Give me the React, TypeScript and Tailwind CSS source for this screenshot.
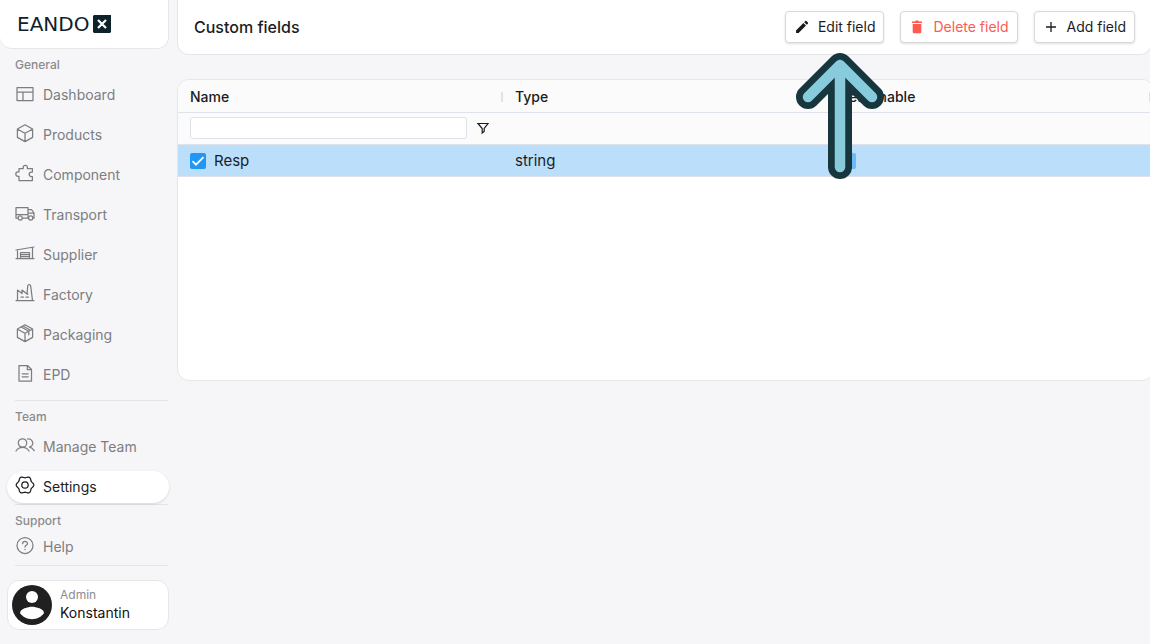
import type { ReactNode } from "react";

const stroke = { fill: "none", stroke: "currentColor", strokeWidth: 1.25, strokeLinecap: "round", strokeLinejoin: "round" } as const;

function Icon({ children }: { children: ReactNode }) {
  return (
    <svg viewBox="0 0 20 20" className="mb-1 size-5 shrink-0" aria-hidden="true" {...stroke}>
      {children}
    </svg>
  );
}

const general: { label: string; icon: ReactNode }[] = [
  { label: "Dashboard", icon: <path d="M2 4.500h16v13H2zM2 9h16M8 9v8.500" /> },
  { label: "Products", icon: <path d="M10 1.800l7.600 4.200v8.400L10 18.600l-7.600-4.200V6zM2.600 6.200L10 10.300l7.400-4.100M10 10.300v8.100" /> },
  { label: "Component", icon: <path d="M4 17.500v-4.200H3a2.200 2.200 0 010-4.400h1V5.700h4.200V4.500a2.100 2.100 0 014.200 0v1.200h5v3.400h-1a2.200 2.200 0 000 4.400h1v4z" /> },
  {
    label: "Transport",
    icon: (
      <>
        <path d="M3 15H1V4.500h12V15H7.500M13 6.500h3.500L19 10v5h-1M13 10.200h6M12.500 15h1M1 11.500h12" />
        <circle cx="5.200" cy="15" r="2.100" />
        <circle cx="15.700" cy="15" r="2.100" />
      </>
    ),
  },
  { label: "Supplier", icon: <path d="M1 15.500h18M2.500 15.500V6.500M17.500 15.500V4.500M1 7l18-3M5.500 15.500V9.500h9v6M5.500 11.500h9M5.500 13.500h9" /> },
  { label: "Factory", icon: <path d="M1 17.500h18M2.500 17.500V7l4.500 3.500V7l5 4 .8-8.500c.1-1.300 2.600-1.300 2.800 0l1.900 15M12 11h1M6 14h2.500M11 14h2.500" /> },
  { label: "Packaging", icon: <path d="M10 1.800l7.600 4.200v8.400L10 18.600l-7.600-4.200V6zM2.600 6.200L10 10.300l7.400-4.100M10 10.300v8.100M6.200 4l7.600 4.200v3.600M8 3l7.500 4.200" /> },
  { label: "EPD", icon: <path d="M4 2.500h8.500L16.500 6.500v11.500H4zM12.300 2.500v4.200h4M7.200 10.800h6M7.200 13.800h6" /> },
];

const peopleIcon = (
  <>
    <circle cx="7.500" cy="8" r="4.200" />
    <path d="M1 16c1.500-2.300 3.700-3.600 6.500-3.600S12.600 13.700 14 16M12.500 4a4.200 4.200 0 112 8.200c2 .3 3.500 1.600 4.700 3.500" />
  </>
);

const gearOutline = Array.from({ length: 72 }, (_, i) => {
  const a = (i / 72) * 2 * Math.PI;
  const r = 8 + 0.8 * Math.cos(6 * a);
  return `${(10 + r * Math.cos(a)).toFixed(2)},${(10 + r * Math.sin(a)).toFixed(2)}`;
}).join(" ");

const gearIcon = (
  <>
    <circle cx="10" cy="10" r="3.200" />
    <polygon points={gearOutline} />
  </>
);

function NavItem({ label, icon, active = false }: { label: string; icon: ReactNode; active?: boolean }) {
  return (
    <a
      href="#"
      aria-current={active ? "page" : undefined}
      className={
        active
          ? "mx-[7px] flex h-8 items-center gap-2 rounded-2xl bg-white pl-2 text-sm text-[#1c1c1e] shadow-sm"
          : "mx-[7px] flex h-8 items-center gap-2 pl-2 text-sm"
      }
    >
      <Icon>{icon}</Icon>
      {label}
    </a>
  );
}

function SectionTitle({ children }: { children: ReactNode }) {
  return <h2 className="pl-[15px] pt-2 text-xs font-medium leading-4 text-[#8b8b8d]">{children}</h2>;
}

function ToolButton({ label, icon, danger = false }: { label: string; icon: ReactNode; danger?: boolean }) {
  return (
    <button
      type="button"
      className={
        danger
          ? "flex h-8 items-center gap-2 rounded border border-[#d9d9d9] bg-white px-2 text-sm text-[#ff5a50] shadow-sm"
          : "flex h-8 items-center gap-2 rounded border border-[#d9d9d9] bg-white px-2 text-sm text-[#1c1c1e] shadow-sm"
      }
    >
      {icon}
      {label}
    </button>
  );
}

export default function App() {
  return (
    <div className="flex min-h-screen overflow-x-hidden bg-[#f6f6f9] font-['Inter','Liberation_Sans',sans-serif] text-[#1c1c1e]">
      <aside className="w-44 shrink-0 text-[#7d7d7f]">
        <div className="mr-[7px] flex h-[49px] items-center gap-1 rounded-b-xl border-b border-r border-[#e6e6e8] bg-white pl-4 text-[#0e2229]">
          <span className="pl-px font-['DejaVu_Sans',sans-serif] text-[20px] leading-6">EANDO</span>
          <svg viewBox="0 0 18 18" className="size-[18px]" role="img" aria-label="X">
            <path d="M1 0h17v17l-1 1H1l-1-1V1z" fill="currentColor" />
            <path d="M5 5l8 8M13 5l-8 8" stroke="#fff" strokeWidth="2.200" />
          </svg>
        </div>
        <nav aria-label="Main">
          <SectionTitle>General</SectionTitle>
          <div className="flex flex-col gap-2 pt-1.5">
            {general.map((n) => (
              <NavItem key={n.label} {...n} />
            ))}
          </div>
          <div className="ml-[15px] mr-2 mt-[9px] border-t border-[#e4e4e7]" />
          <SectionTitle>Team</SectionTitle>
          <div className="flex flex-col gap-2 pt-1.5">
            <NavItem label="Manage Team" icon={peopleIcon} />
            <NavItem label="Settings" icon={gearIcon} active />
          </div>
          <div className="ml-[15px] mr-2 mt-px border-t border-[#e4e4e7]" />
          <SectionTitle>Support</SectionTitle>
          <div className="pt-0.5">
            <NavItem
              label="Help"
              icon={
                <>
                  <circle cx="10" cy="10.500" r="8" />
                  <path d="M7.600 8.700c0-3 4.900-3 4.900-.2 0 1.800-2.500 1.900-2.500 3.600M10 14.400v.3" />
                </>
              }
            />
          </div>
          <div className="ml-[15px] mr-2 mt-0.5 border-t border-[#e4e4e7]" />
        </nav>
        <div className="mx-[7px] mt-3.5 flex h-[50px] items-center gap-2 rounded-xl border border-[#e6e6e8] bg-white pl-1">
          <svg viewBox="0 0 40 40" className="size-10" aria-hidden="true">
            <circle cx="20" cy="20" r="20" fill="#202020" />
            <circle cx="20" cy="12" r="6" fill="#fff" />
            <path d="M8 28c0-4 8-6.200 12-6.200S32 24 32 28c-2.600 3.900-7 6.200-12 6.200S10.600 31.900 8 28z" fill="#fff" />
          </svg>
          <div>
            <p className="text-xs leading-4 text-[#8b8b8d]">Admin</p>
            <p className="text-sm leading-5 text-[#111]">Konstantin</p>
          </div>
        </div>
      </aside>

      <main className="-mr-0.5 ml-px min-w-0 grow">
        <header className="flex h-[55px] items-center justify-between rounded-b-xl border border-t-0 border-[#e6e6e8] bg-white pl-4 pr-4">
          <h1 className="text-base font-medium">Custom fields</h1>
          <div className="relative flex gap-4">
            <ToolButton
              label="Edit field"
              icon={
                <svg viewBox="0 0 16 16" className="size-4" fill="currentColor" aria-hidden="true">
                  <path d="M2 11.400L9.400 4l2.600 2.600L4.600 14H2zM10.200 3.200l1.100-1.100a.8.8 0 011.100 0l1.500 1.500a.8.8 0 010 1.100l-1.100 1.100z" />
                </svg>
              }
            />
            <ToolButton
              danger
              label="Delete field"
              icon={
                <svg viewBox="0 0 16 16" className="size-4" fill="currentColor" aria-hidden="true">
                  <path d="M3 2.500h3l.8-.9h2.400l.8.900h3V4H3zM3.700 5h8.600v8a1.300 1.300 0 01-1.300 1.300H5A1.300 1.300 0 013.700 13z" />
                </svg>
              }
            />
            <ToolButton
              label="Add field"
              icon={
                <svg viewBox="0 0 16 16" className="size-4" aria-hidden="true">
                  <path d="M8 3v10M3 8h10" stroke="currentColor" strokeWidth="1.300" />
                </svg>
              }
            />
            <svg viewBox="0 0 88 126" className="pointer-events-none absolute left-[11px] top-[42px] z-10 h-[126px] w-[88px]" fill="none" strokeLinecap="round" strokeLinejoin="round" aria-hidden="true">
              <path d="M12 44L44 12L76 44M44 12V114" stroke="#18363d" strokeWidth="24" />
              <path d="M12 44L44 12L76 44M44 12V114" stroke="#88cbdd" strokeWidth="10.500" />
            </svg>
          </div>
        </header>

        <section className="-mr-0.5 mt-6 h-[302px] overflow-hidden rounded-xl border border-[#e6e6e8] bg-white">
          <table className="w-full table-fixed border-collapse text-left text-sm">
            <colgroup>
              <col className="w-1/3" />
              <col className="w-1/3" />
              <col className="w-1/3" />
            </colgroup>
            <thead className="bg-[#fbfbfc]">
              <tr className="h-8 border-b border-[#dde2eb]">
                <th className="px-3 pb-0 pt-0.5 font-medium">
                  <div className="-mr-3 flex items-center justify-between">
                    Name
                    <span className="h-2.5 w-0.5 bg-[#dde2eb]" />
                  </div>
                </th>
                <th className="px-3 pb-0 pt-0.5 font-medium">Type</th>
                <th className="px-3 pb-0 pt-0.5 font-medium">
                  <div className="-mr-3 flex items-center justify-between">
                    Searchable
                    <span className="h-2.5 w-1 bg-[#dde2eb]" />
                  </div>
                </th>
              </tr>
              <tr className="h-8 border-b border-[#dde2eb]">
                <td className="px-3 py-0">
                  <div className="flex items-center gap-2">
                    <input aria-label="Name filter" className="h-[22px] min-w-0 grow rounded-[3px] border border-[#dde2eb] bg-white px-2" />
                    <button type="button" aria-label="Open filter menu" className="flex size-4 items-center">
                      <svg viewBox="0 0 16 16" className="size-4" fill="none" stroke="currentColor" strokeWidth="1.200" aria-hidden="true">
                        <path d="M3 3.500h10L9.200 8.500v3L7.200 13V8.500z" />
                      </svg>
                    </button>
                  </div>
                </td>
                <td />
                <td />
              </tr>
            </thead>
            <tbody>
              <tr className="h-8 border-b border-[#dde2eb] bg-[#bbdffb] text-[15px] leading-5">
                <td className="px-3 pb-0 pt-0.5">
                  <label className="flex items-center gap-2">
                    <span className="grid size-4">
                      <input type="checkbox" defaultChecked className="col-start-1 row-start-1 size-4 appearance-none rounded-[2px] bg-[#2196f3]" />
                      <svg viewBox="0 0 16 16" className="pointer-events-none col-start-1 row-start-1 size-4" fill="none" stroke="#fff" strokeWidth="1.800" aria-hidden="true">
                        <path d="M2.500 8.200l3.500 3.500 7.500-7.500" />
                      </svg>
                    </span>
                    Resp
                  </label>
                </td>
                <td className="px-3 pb-0 pt-0.5">string</td>
                <td className="px-3 pb-0 pt-0.5">
                  <input type="checkbox" defaultChecked disabled aria-label="Searchable" className="block size-4 appearance-none rounded-[2px] bg-[#6eb9f7]" />
                </td>
              </tr>
            </tbody>
          </table>
        </section>
      </main>
    </div>
  );
}
